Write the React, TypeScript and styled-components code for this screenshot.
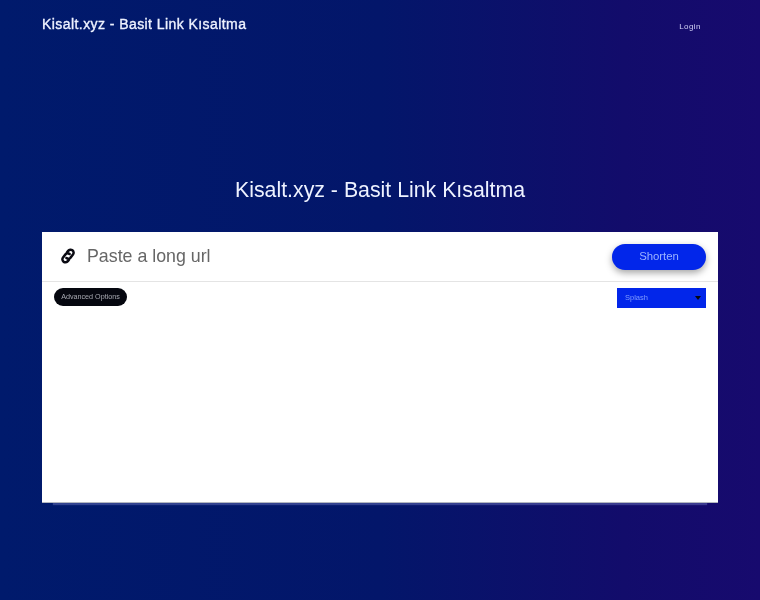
import React from 'react'
import styled, { createGlobalStyle } from 'styled-components'

const GlobalStyle = createGlobalStyle`
  html, body {
    margin: 0;
    padding: 0;
  }
  body {
    font-family: 'Liberation Sans', Arial, sans-serif;
  }
`

const Page = styled.div`
  width: 760px;
  height: 600px;
  overflow: hidden;
  box-sizing: border-box;
  padding: 0 42px;
  will-change: transform;
  background: linear-gradient(90deg, #001a6c 0%, #03166a 50%, #120c6b 82%, #170a6e 100%);
`

const Header = styled.header`
  height: 48px;
  display: flex;
  align-items: center;
  justify-content: space-between;
`

const Brand = styled.div`
  color: #eef2ff;
  font-size: 14px;
  letter-spacing: 0.43px;
  -webkit-text-stroke: 0.35px #eef2ff;
`

const Login = styled.a`
  color: #d2d2f6;
  font-size: 8px;
  letter-spacing: 0.45px;
  margin-right: 17px;
  margin-top: 4px;
`

const Title = styled.h1`
  margin: 128px 0 0;
  height: 28px;
  line-height: 28px;
  color: #eef2ff;
  font-size: 21.3px;
  font-weight: 400;
  text-align: center;
`

const Card = styled.section`
  margin-top: 28px;
  height: 271px;
  background: #fff;
  border-bottom: 1px solid #b4b8c0;
  box-sizing: border-box;
  box-shadow: 0 13px 1px -11px rgba(110, 120, 190, 0.45);
`

const InputRow = styled.div`
  height: 49px;
  display: flex;
  align-items: center;
  padding: 0 12px 0 15px;
  border-bottom: 1px solid #e4e4e4;
`

const LinkIcon = styled.svg`
  width: 22px;
  height: 22px;
  margin-top: -1px;
  flex: none;
  fill: none;
  stroke: #0a0a12;
  stroke-width: 2.2;
  stroke-linecap: round;
`

const UrlText = styled.div`
  flex: 1;
  margin-left: 8px;
  color: #666;
  font-size: 17.8px;
`

const ShortenButton = styled.button`
  width: 94px;
  height: 26px;
  padding: 0 0 2px;
  border: none;
  border-radius: 13px;
  background: #0226ea;
  color: #9db4ff;
  font-family: inherit;
  font-size: 11.4px;
  letter-spacing: -0.05px;
  box-shadow: 0 3px 7px rgba(0, 0, 0, 0.35);
`

const OptionsRow = styled.div`
  display: flex;
  align-items: flex-start;
  justify-content: space-between;
  padding: 6px 12px 0;
`

const AdvancedButton = styled.button`
  width: 73px;
  height: 18px;
  padding: 0 0 1px;
  border: none;
  border-radius: 9px;
  background: #05070f;
  color: #a8aab2;
  font-family: inherit;
  font-size: 7.2px;
`

const SelectBox = styled.div`
  width: 89px;
  height: 20px;
  box-sizing: border-box;
  padding: 0 5px 1px 8px;
  display: flex;
  align-items: center;
  justify-content: space-between;
  background: #0226ea;
  color: #7f9bff;
  font-size: 7.5px;
`

const Caret = styled.span`
  width: 0;
  height: 0;
  margin-top: 1px;
  border-left: 3px solid transparent;
  border-right: 3px solid transparent;
  border-top: 4px solid #05070f;
`

export default function App() {
  return (
    <Page>
      <GlobalStyle />
      <Header>
        <Brand>Kisalt.xyz - Basit Link Kısaltma</Brand>
        <Login>Login</Login>
      </Header>
      <Title>Kisalt.xyz - Basit Link Kısaltma</Title>
      <Card>
        <InputRow>
          <LinkIcon viewBox="-9.5 -9.5 19 19">
            <g transform="rotate(-52)">
              <path d="M2.2 0A2.6 2.6 0 0 0 0 -2.6H-3.6A2.6 2.6 0 0 0 -3.6 2.6H-2" />
              <path d="M-2.2 0A2.6 2.6 0 0 0 0 2.6H3.6A2.6 2.6 0 0 0 3.6 -2.6H2" />
            </g>
          </LinkIcon>
          <UrlText>Paste a long url</UrlText>
          <ShortenButton>Shorten</ShortenButton>
        </InputRow>
        <OptionsRow>
          <AdvancedButton>Advanced Options</AdvancedButton>
          <SelectBox>
            Splash
            <Caret />
          </SelectBox>
        </OptionsRow>
      </Card>
    </Page>
  )
}
